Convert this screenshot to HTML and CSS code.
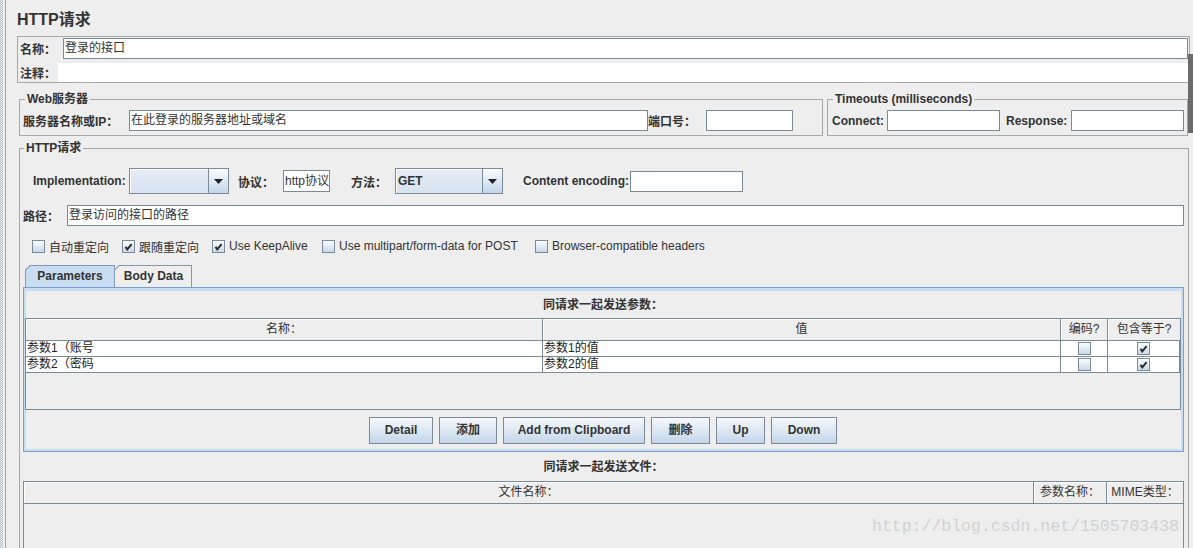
FILE: index.html
```html
<!DOCTYPE html>
<html>
<head>
<meta charset="utf-8">
<link rel="stylesheet" href="styles.css">
</head>
<body>
<div class="app">
  <div class="gutter"></div>
  <div class="main">
    <div class="title">HTTP请求</div>

    <div class="namebox">
      <div class="nrow">
        <span class="lbl w-name">名称：</span>
        <div class="field grow">登录的接口</div>
      </div>
      <div class="nrow nrow2">
        <span class="lbl w-cmt">注释：</span>
        <div class="plain grow"></div>
      </div>
    </div>

    <div class="grouprow">
      <fieldset class="grp web">
        <legend>Web服务器</legend>
        <div class="frow">
          <span class="lbl w-server">服务器名称或IP：</span>
          <div class="field w-serverf">在此登录的服务器地址或域名</div>
          <span class="lbl w-port">端口号：</span>
          <div class="field w-portf"></div>
        </div>
      </fieldset>
      <fieldset class="grp timeouts">
        <legend>Timeouts (milliseconds)</legend>
        <div class="frow">
          <span class="lbl w-connect">Connect:</span>
          <div class="field w-tf"></div>
          <span class="lbl w-resp">Response:</span>
          <div class="field w-tf"></div>
        </div>
      </fieldset>
    </div>

    <fieldset class="grp http">
      <legend>HTTP请求</legend>

      <div class="r1">
        <span class="lbl w-impl">Implementation:</span>
        <div class="combo w-implc">
          <div class="val"></div>
          <div class="arr"><svg width="9" height="5" viewBox="0 0 9 5"><path d="M0 0H9L4.5 5Z" fill="#222"/></svg></div>
        </div>
        <span class="lbl w-proto">协议：</span>
        <div class="field w-protof">http协议</div>
        <span class="lbl w-method">方法：</span>
        <div class="combo w-methodc">
          <div class="val">GET</div>
          <div class="arr"><svg width="9" height="5" viewBox="0 0 9 5"><path d="M0 0H9L4.5 5Z" fill="#222"/></svg></div>
        </div>
        <span class="lbl w-enc">Content encoding:</span>
        <div class="field w-encf"></div>
      </div>

      <div class="r2">
        <span class="lbl w-path">路径：</span>
        <div class="field grow">登录访问的接口的路径</div>
      </div>

      <div class="r3">
        <label class="ck ck1"><span class="cb"></span>自动重定向</label>
        <label class="ck ck2"><span class="cb"><svg width="11" height="11" viewBox="0 0 11 11"><path d="M2.5 5.8L4.3 8.3L8.6 3.2" fill="none" stroke="#2a2a2a" stroke-width="2"/></svg></span>跟随重定向</label>
        <label class="ck ck3"><span class="cb"><svg width="11" height="11" viewBox="0 0 11 11"><path d="M2.5 5.8L4.3 8.3L8.6 3.2" fill="none" stroke="#2a2a2a" stroke-width="2"/></svg></span>Use KeepAlive</label>
        <label class="ck ck4"><span class="cb"></span>Use multipart/form-data for POST</label>
        <label class="ck"><span class="cb"></span>Browser-compatible headers</label>
      </div>

      <div class="tabs">
        <div class="tab sel">Parameters</div>
        <div class="tab">Body Data</div>
      </div>

      <div class="panel">
        <div class="phead">同请求一起发送参数：</div>
        <div class="ptable">
          <div class="thead pcols">
            <div class="hc">名称：</div>
            <div class="hc">值</div>
            <div class="hc">编码?</div>
            <div class="hc last">包含等于?</div>
          </div>
          <div class="trow pcols">
            <div class="tc">参数1（账号</div>
            <div class="tc">参数1的值</div>
            <div class="tc ctr"><span class="cb"></span></div>
            <div class="tc ctr last"><span class="cb"><svg width="11" height="11" viewBox="0 0 11 11"><path d="M2.5 5.8L4.3 8.3L8.6 3.2" fill="none" stroke="#2a2a2a" stroke-width="2"/></svg></span></div>
          </div>
          <div class="trow pcols">
            <div class="tc">参数2（密码</div>
            <div class="tc">参数2的值</div>
            <div class="tc ctr"><span class="cb"></span></div>
            <div class="tc ctr last"><span class="cb"><svg width="11" height="11" viewBox="0 0 11 11"><path d="M2.5 5.8L4.3 8.3L8.6 3.2" fill="none" stroke="#2a2a2a" stroke-width="2"/></svg></span></div>
          </div>
        </div>
        <div class="btns">
          <div class="btn b-detail">Detail</div>
          <div class="btn b-add">添加</div>
          <div class="btn b-clip">Add from Clipboard</div>
          <div class="btn b-del">删除</div>
          <div class="btn b-up">Up</div>
          <div class="btn b-down">Down</div>
        </div>
      </div>

      <div class="fhead">同请求一起发送文件：</div>
      <div class="ftable">
        <div class="thead fcols">
          <div class="hc">文件名称：</div>
          <div class="hc">参数名称：</div>
          <div class="hc last">MIME类型：</div>
        </div>
      </div>
    </fieldset>
  </div>
  <div class="thumb"></div>
  <div class="watermark">http://blog.csdn.net/1505703438</div>
</div>
</body>
</html>
```

FILE: styles.css
```css
* { box-sizing: border-box; }
html, body { margin: 0; padding: 0; }
body {
  background: #eeeeee;
  font-family: "Liberation Sans", "Noto Sans CJK SC", sans-serif;
  font-size: 12px;
  color: #333333;
}
.app {
  position: relative;
  display: flex;
  height: 548px;
  overflow: hidden;
}
.gutter {
  flex: none;
  width: 6px;
  padding-right: 2px;
  border-right: 1px solid #a3a3a3;
  background-image: repeating-conic-gradient(#b3bcc8 0 25%, transparent 0 50%);
  background-size: 2px 2px;
  background-clip: content-box;
}
.main {
  flex: 1;
  min-width: 0;
  padding: 0 3px 0 11px;
}
.title {
  height: 30px;
  padding-top: 10px;
  line-height: 20px;
  font-size: 16px;
  font-weight: bold;
  margin-bottom: 6px;
}
.lbl {
  flex: none;
  font-weight: bold;
  white-space: nowrap;
}
.grow { flex: 1; min-width: 0; }
.field {
  flex: none;
  height: 21px;
  background: #ffffff;
  border: 1px solid #7a8a99;
  padding: 0 1px;
  line-height: 19px;
  white-space: nowrap;
  overflow: hidden;
}
.field.grow { flex: 1; }
.plain { height: 19px; background: #ffffff; }

/* name box */
.namebox {
  height: 47px;
  border: 1px solid #a8a8a8;
  padding: 1px 1px 0 2px;
}
.nrow { display: flex; align-items: center; height: 21px; }
.nrow2 { margin-top: 4px; height: 19px; }
.w-name { width: 43px; }
.w-cmt { width: 38px; }

/* groups */
.grouprow {
  display: flex;
  gap: 4px;
  margin: 9px 2px 0 2px;
}
.grp {
  margin: 0;
  min-width: 0;
  border: 1px solid #a8a8a8;
}
.grp legend {
  font-weight: bold;
  line-height: 14px;
  padding: 0 2px;
}
.web { flex: none; width: 804px; padding: 4px 0 4px 3px; }
.web legend { margin-left: 2px; }
.timeouts { flex: 1; padding: 4px 3px 4px 4px; }
.timeouts legend { margin-left: 1px; }
.frow { display: flex; align-items: center; height: 21px; }
.w-server { width: 106px; }
.w-serverf { width: 519px; }
.w-port { width: 58px; }
.w-portf { width: 87px; }
.w-connect { width: 55px; }
.w-tf { width: 113px; }
.w-resp { width: 65px; margin-left: 6px; }

/* HTTP group */
.http {
  height: 440px;
  margin: 5px 1px 0 2px;
  padding: 13px 4px 0 3px;
}
.http legend { margin-left: 1px; }
.r1 { display: flex; align-items: center; height: 26px; padding-left: 10px; }
.w-impl { width: 96px; }
.w-implc { width: 100px; }
.w-proto { width: 45px; margin-left: 9px; }
.w-protof { width: 47px; height: 22px; line-height: 20px; }
.w-method { width: 44px; margin-left: 21px; }
.w-methodc { width: 108px; }
.w-enc { width: 107px; margin-left: 20px; }
.w-encf { width: 113px; }

.combo {
  flex: none;
  display: flex;
  height: 26px;
  border: 1px solid #7a8a99;
  background: linear-gradient(#e6edf5, #d7e3f0);
}
.combo .val {
  flex: 1;
  padding-left: 2px;
  line-height: 24px;
  font-weight: bold;
  box-shadow: inset 1px 1px 0 #ffffff;
}
.combo .arr {
  flex: none;
  width: 20px;
  border-left: 1px solid #7a8a99;
  background: linear-gradient(#fafcfe, #dfe9f4 50%, #c3d5ea);
  display: flex;
  align-items: center;
  justify-content: center;
}

.r2 { display: flex; align-items: center; height: 21px; margin-top: 11px; }
.w-path { width: 44px; }

.r3 {
  display: flex;
  align-items: center;
  height: 14px;
  margin-top: 13px;
  padding-left: 9px;
  gap: 13px;
}
.ck { flex: none; display: flex; align-items: center; gap: 4px; white-space: nowrap; }
.ck1, .ck2 { width: 77px; }
.ck3 { width: 97px; }
.ck4 { width: 200px; }
.cb {
  flex: none;
  display: inline-flex;
  align-items: center;
  justify-content: center;
  width: 13px;
  height: 13px;
  border: 1px solid #7a8a99;
  background: linear-gradient(#fbfdfe, #c8d8ea);
}

/* tabs */
.tabs { display: flex; height: 22px; margin: 12px 0 0 2px; }
.tab {
  height: 22px;
  border: 1px solid #8397b0;
  border-bottom: none;
  line-height: 20px;
  font-weight: bold;
  text-align: center;
  background-color: #eeeeee;
  background-image: linear-gradient(135deg, transparent 3.5px, #8397b0 3.5px, #8397b0 4.6px, transparent 4.6px);
  background-origin: border-box;
  background-repeat: no-repeat;
  clip-path: polygon(5px 0, 100% 0, 100% 100%, 0 100%, 0 5px);
}
.tab.sel { width: 90px; background-color: #c8ddf2; }
.tab + .tab { width: 78px; margin-left: -1px; padding-left: 1px; }

/* panel */
.panel {
  border: 1px solid #7b9dcf;
  box-shadow: inset 0 0 0 2px #c9ddf2, inset 0 3px 0 #c9ddf2;
  padding: 10px 2px 7px 1px;
}
.phead, .fhead {
  text-align: center;
  font-weight: bold;
  line-height: 14px;
}
.ptable {
  margin-top: 6px;
  height: 92px;
  border: 1px solid #7a8a99;
  background: #eeeeee;
  overflow: hidden;
}
.pcols { display: grid; grid-template-columns: 517px 518px 47px 1fr; }
.fcols { display: grid; grid-template-columns: 1010px 73px 1fr; }
.thead {
  height: 22px;
  border-bottom: 1px solid #7a8a99;
  background: #eeeeee;
}
.hc {
  border-right: 1px solid #7a8a99;
  box-shadow: inset 1px 1px 0 #ffffff;
  text-align: center;
  line-height: 21px;
  white-space: nowrap;
  overflow: hidden;
}
.last { border-right: none; }
.trow {
  height: 16px;
  background: #ffffff;
  border-bottom: 1px solid #7a8a99;
}
.tc {
  border-right: 1px solid #7a8a99;
  line-height: 15px;
  padding-left: 1px;
  white-space: nowrap;
  overflow: hidden;
  color: #222222;
}
.tc.ctr { display: flex; align-items: center; justify-content: center; padding-left: 0; }

.btns {
  display: flex;
  justify-content: center;
  gap: 6px;
  margin-top: 7px;
}
.btn {
  height: 27px;
  border: 1px solid #7a8a99;
  background: linear-gradient(#f6f9fc, #dde8f3 50%, #c4d6ea);
  font-weight: bold;
  line-height: 25px;
  text-align: center;
  white-space: nowrap;
}
.b-detail { width: 64px; }
.b-add { width: 58px; }
.b-clip { width: 142px; }
.b-del { width: 59px; }
.b-up { width: 49px; }
.b-down { width: 66px; }

.fhead { margin-top: 8px; }
.ftable {
  margin-top: 7px;
  height: 120px;
  border: 1px solid #7a8a99;
}

.thumb {
  position: absolute;
  right: 0;
  top: 54px;
  width: 5px;
  height: 79px;
  background: #6b6b6b;
}
.watermark {
  position: absolute;
  left: 872px;
  top: 517px;
  font-family: "Liberation Mono", "DejaVu Sans Mono", monospace;
  font-size: 16.5px;
  line-height: 20px;
  color: #d2d2d2;
  white-space: nowrap;
}
```
